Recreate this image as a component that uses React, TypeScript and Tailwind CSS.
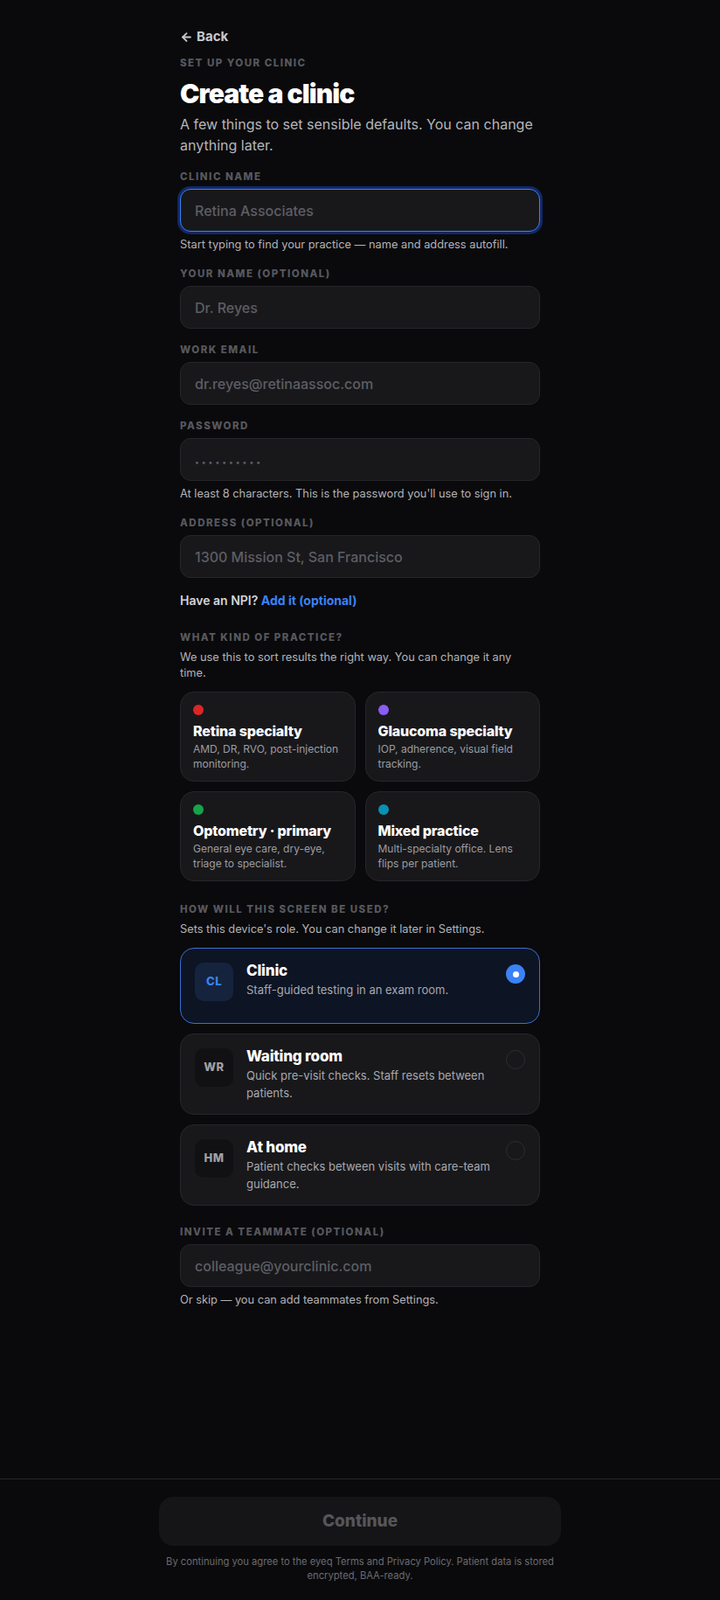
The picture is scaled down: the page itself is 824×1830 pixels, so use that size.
import React, { useState } from 'react';
import { ArrowLeft } from 'lucide-react';

type Practice = { id: string; title: string; desc: string; dot: string };
type Role = { id: string; code: string; title: string; desc: string };

const practices: Practice[] = [
  { id: 'retina', title: 'Retina specialty', desc: 'AMD, DR, RVO, post-injection monitoring.', dot: 'bg-[#dc2626]' },
  { id: 'glaucoma', title: 'Glaucoma specialty', desc: 'IOP, adherence, visual field tracking.', dot: 'bg-[#8b5cf6]' },
  { id: 'optometry', title: 'Optometry · primary', desc: 'General eye care, dry-eye, triage to specialist.', dot: 'bg-[#16a34a]' },
  { id: 'mixed', title: 'Mixed practice', desc: 'Multi-specialty office. Lens flips per patient.', dot: 'bg-[#0891b2]' },
];

const roles: Role[] = [
  { id: 'clinic', code: 'CL', title: 'Clinic', desc: 'Staff-guided testing in an exam room.' },
  { id: 'waiting', code: 'WR', title: 'Waiting room', desc: 'Quick pre-visit checks. Staff resets between patients.' },
  { id: 'home', code: 'HM', title: 'At home', desc: 'Patient checks between visits with care-team guidance.' },
];

const eyebrow = 'text-[11.5px] leading-4 font-extrabold tracking-[0.13em] text-[#58585e] uppercase';
const helper = 'text-[12.8px] leading-[18px] text-[#b3b3b8]';

const Field = ({
  label,
  placeholder,
  hint,
  type = 'text',
  active = false,
  masked = false,
}: {
  label: string;
  placeholder: string;
  hint?: string;
  type?: string;
  active?: boolean;
  masked?: boolean;
}) => (
  <div>
    <div className={`mb-1.5 ${eyebrow}`}>{label}</div>
    <input
      type={type}
      placeholder={placeholder}
      className={`block h-[49px] w-full rounded-xl border bg-[#18181b] px-4 text-[16px] font-medium text-white outline-none placeholder:text-[#5e5e64] ${
        masked ? 'placeholder:text-[9px] placeholder:tracking-[3px]' : ''
      } ${active ? 'border-[#3b82f6] ring-[3px] ring-[#1d4ed8]/45' : 'border-[#26262a]'}`}
    />
    {hint && <p className={`mt-1.5 ${helper}`}>{hint}</p>}
  </div>
);

export default function App() {
  const [practice, setPractice] = useState<string | null>(null);
  const [role, setRole] = useState('clinic');

  return (
    <div className="flex min-h-screen flex-col bg-[#0a0a0c] font-['Inter','Noto_Sans',sans-serif] antialiased">
      <main className="mx-auto w-full max-w-[460px] flex-1 px-6 pt-8 pb-10">
        <button className="flex h-5 items-center gap-1 text-[15px] font-bold text-[#c8c8cc]">
          <ArrowLeft size={15} strokeWidth={3} />
          <span>Back</span>
        </button>
        <div className={`mt-3 ${eyebrow}`}>Set up your clinic</div>
        <h1 className="mt-[9px] text-[30px] leading-9 font-black tracking-[-0.03em] text-white">Create a clinic</h1>
        <p className="mt-1.5 text-[16px] leading-[23.5px] text-[#b5b5ba]">
          A few things to set sensible defaults. You can change anything later.
        </p>

        <div className="mt-4 flex flex-col gap-4">
          <Field
            label="Clinic name"
            placeholder="Retina Associates"
            hint="Start typing to find your practice — name and address autofill."
            active
          />
          <Field label="Your name (optional)" placeholder="Dr. Reyes" />
          <Field label="Work email" placeholder="dr.reyes@retinaassoc.com" type="email" />
          <Field
            label="Password"
            placeholder="••••••••••"
            type="password"
            masked
            hint="At least 8 characters. This is the password you'll use to sign in."
          />
          <Field label="Address (optional)" placeholder="1300 Mission St, San Francisco" />
        </div>

        <p className="mt-4 text-[14px] leading-5 font-semibold text-[#d4d4d8]">
          Have an NPI? <span className="font-bold text-[#3b82f6]">Add it (optional)</span>
        </p>

        <div className="mt-6">
          <div className={eyebrow}>What kind of practice?</div>
          <p className={`mt-1.5 ${helper}`}>We use this to sort results the right way. You can change it any time.</p>
          <div className="mt-3 grid grid-cols-2 gap-[11px]">
            {practices.map((p) => (
              <button
                key={p.id}
                onClick={() => setPractice(p.id)}
                className={`flex h-[103px] flex-col items-start rounded-2xl border px-[14px] pt-[14px] text-left ${
                  practice === p.id ? 'border-[#3b6fd0] bg-[#0d1424]' : 'border-[#26262a] bg-[#18181b]'
                }`}
              >
                <span className={`h-3 w-3 rounded-full ${p.dot}`} />
                <span className="mt-[8px] text-[16px] leading-[21px] font-extrabold tracking-[-0.01em] text-white">{p.title}</span>
                <span className="mt-px text-[12px] leading-[17px] text-[#9c9ca2]">{p.desc}</span>
              </button>
            ))}
          </div>
        </div>

        <div className="mt-6">
          <div className={eyebrow}>How will this screen be used?</div>
          <p className={`mt-1.5 ${helper}`}>Sets this device's role. You can change it later in Settings.</p>
          <div className="mt-3 flex flex-col gap-[11px]">
            {roles.map((r) => {
              const on = role === r.id;
              return (
                <button
                  key={r.id}
                  onClick={() => setRole(r.id)}
                  className={`flex min-h-[87px] items-start gap-[15px] rounded-2xl border px-4 pt-4 pb-[14px] text-left ${
                    on ? 'border-[#3b6fd0] bg-[#0d1424]' : 'border-[#26262a] bg-[#18181b]'
                  }`}
                >
                  <span
                    className={`flex h-11 w-11 shrink-0 items-center justify-center rounded-[10px] text-[13px] font-extrabold tracking-[0.04em] ${
                      on ? 'bg-[#16233d] text-[#3b82f6]' : 'bg-[#111113] text-[#a1a1a6]'
                    }`}
                  >
                    {r.code}
                  </span>
                  <span className="flex flex-1 flex-col">
                    <span className="-mt-px text-[17px] leading-5 font-extrabold tracking-[-0.01em] text-white">{r.title}</span>
                    <span className="mt-[3px] text-[13px] leading-[19.5px] text-[#a8a8ad]">{r.desc}</span>
                  </span>
                  <span
                    className={`mt-[2px] flex h-[22px] w-[22px] shrink-0 items-center justify-center rounded-full ${
                      on ? 'bg-[#3b82f6]' : 'border border-[#2c2c31]'
                    }`}
                  >
                    {on && <span className="h-[7px] w-[7px] rounded-full bg-white" />}
                  </span>
                </button>
              );
            })}
          </div>
        </div>

        <div className="mt-[22px]">
          <Field
            label="Invite a teammate (optional)"
            placeholder="colleague@yourclinic.com"
            type="email"
            hint="Or skip — you can add teammates from Settings."
          />
        </div>
      </main>

      <footer className="border-t border-[#26262a] bg-[#0a0a0c] px-6 pt-5 pb-5">
        <div className="mx-auto w-full max-w-[460px]">
          <button disabled className="h-14 w-full rounded-2xl bg-[#151517] text-[19px] font-extrabold text-[#55555a]">
            Continue
          </button>
          <p className="mt-2.5 text-center text-[11.2px] leading-4 text-[#6b6b70]">
            By continuing you agree to the eyeq Terms and Privacy Policy. Patient data is stored encrypted, BAA-ready.
          </p>
        </div>
      </footer>
    </div>
  );
}
